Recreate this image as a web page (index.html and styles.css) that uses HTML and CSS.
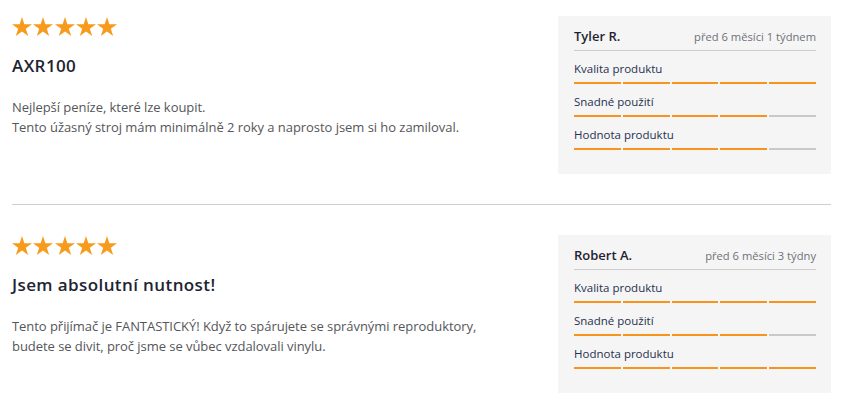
FILE: index.html
```html
<!DOCTYPE html>
<html lang="cs">
<head>
<meta charset="utf-8">
<title>Recenze</title>
<link rel="stylesheet" href="styles.css">
</head>
<body>
<div class="reviews">
  <div class="review">
    <div class="review-main">
      <div class="stars">
        <svg class="star" viewBox="0 0 20 19"><polygon points="10,0 12.35,7.26 20,7.26 13.82,11.74 16.18,19 10,14.51 3.82,19 6.18,11.74 0,7.26 7.65,7.26"/></svg>
        <svg class="star" viewBox="0 0 20 19"><polygon points="10,0 12.35,7.26 20,7.26 13.82,11.74 16.18,19 10,14.51 3.82,19 6.18,11.74 0,7.26 7.65,7.26"/></svg>
        <svg class="star" viewBox="0 0 20 19"><polygon points="10,0 12.35,7.26 20,7.26 13.82,11.74 16.18,19 10,14.51 3.82,19 6.18,11.74 0,7.26 7.65,7.26"/></svg>
        <svg class="star" viewBox="0 0 20 19"><polygon points="10,0 12.35,7.26 20,7.26 13.82,11.74 16.18,19 10,14.51 3.82,19 6.18,11.74 0,7.26 7.65,7.26"/></svg>
        <svg class="star" viewBox="0 0 20 19"><polygon points="10,0 12.35,7.26 20,7.26 13.82,11.74 16.18,19 10,14.51 3.82,19 6.18,11.74 0,7.26 7.65,7.26"/></svg>
      </div>
      <h3 class="review-title">AXR100</h3>
      <p class="review-text">Nejlepší peníze, které lze koupit.<br>Tento úžasný stroj mám minimálně 2 roky a naprosto jsem si ho zamiloval.</p>
    </div>
    <div class="card">
      <div class="card-head">
        <span class="author">Tyler R.</span>
        <span class="date">před 6 měsíci 1 týdnem</span>
      </div>
      <div class="rating">
        <div class="rating-label">Kvalita produktu</div>
        <div class="bars"><span class="bar on"></span><span class="bar on"></span><span class="bar on"></span><span class="bar on"></span><span class="bar on"></span></div>
      </div>
      <div class="rating">
        <div class="rating-label">Snadné použití</div>
        <div class="bars"><span class="bar on"></span><span class="bar on"></span><span class="bar on"></span><span class="bar on"></span><span class="bar"></span></div>
      </div>
      <div class="rating">
        <div class="rating-label">Hodnota produktu</div>
        <div class="bars"><span class="bar on"></span><span class="bar on"></span><span class="bar on"></span><span class="bar on"></span><span class="bar"></span></div>
      </div>
    </div>
  </div>

  <div class="review">
    <div class="review-main">
      <div class="stars">
        <svg class="star" viewBox="0 0 20 19"><polygon points="10,0 12.35,7.26 20,7.26 13.82,11.74 16.18,19 10,14.51 3.82,19 6.18,11.74 0,7.26 7.65,7.26"/></svg>
        <svg class="star" viewBox="0 0 20 19"><polygon points="10,0 12.35,7.26 20,7.26 13.82,11.74 16.18,19 10,14.51 3.82,19 6.18,11.74 0,7.26 7.65,7.26"/></svg>
        <svg class="star" viewBox="0 0 20 19"><polygon points="10,0 12.35,7.26 20,7.26 13.82,11.74 16.18,19 10,14.51 3.82,19 6.18,11.74 0,7.26 7.65,7.26"/></svg>
        <svg class="star" viewBox="0 0 20 19"><polygon points="10,0 12.35,7.26 20,7.26 13.82,11.74 16.18,19 10,14.51 3.82,19 6.18,11.74 0,7.26 7.65,7.26"/></svg>
        <svg class="star" viewBox="0 0 20 19"><polygon points="10,0 12.35,7.26 20,7.26 13.82,11.74 16.18,19 10,14.51 3.82,19 6.18,11.74 0,7.26 7.65,7.26"/></svg>
      </div>
      <h3 class="review-title">Jsem absolutní nutnost!</h3>
      <p class="review-text">Tento přijímač je FANTASTICKÝ! Když to spárujete se správnými reproduktory, budete se divit, proč jsme se vůbec vzdalovali vinylu.</p>
    </div>
    <div class="card">
      <div class="card-head">
        <span class="author">Robert A.</span>
        <span class="date">před 6 měsíci 3 týdny</span>
      </div>
      <div class="rating">
        <div class="rating-label">Kvalita produktu</div>
        <div class="bars"><span class="bar on"></span><span class="bar on"></span><span class="bar on"></span><span class="bar on"></span><span class="bar on"></span></div>
      </div>
      <div class="rating">
        <div class="rating-label">Snadné použití</div>
        <div class="bars"><span class="bar on"></span><span class="bar on"></span><span class="bar on"></span><span class="bar on"></span><span class="bar"></span></div>
      </div>
      <div class="rating">
        <div class="rating-label">Hodnota produktu</div>
        <div class="bars"><span class="bar on"></span><span class="bar on"></span><span class="bar on"></span><span class="bar on"></span><span class="bar on"></span></div>
      </div>
    </div>
  </div>
</div>
</body>
</html>
```

FILE: styles.css
```css
* { box-sizing: border-box; }
html, body { margin: 0; padding: 0; background: #fff; }
body {
  font-family: "Open Sans", "Liberation Sans", sans-serif;
  color: #333;
}
.reviews {
  padding: 16px 18px 0 12px;
}
.review {
  display: flex;
  align-items: flex-start;
  padding-bottom: 30px;
  border-bottom: 1px solid #cfcfcf;
}
.review + .review {
  padding-top: 30px;
  border-bottom: none;
}
.review-main {
  width: 500px;
  padding-top: 1px;
}
.stars {
  display: flex;
  gap: 1.25px;
}
.star {
  width: 20px;
  height: 19px;
  fill: #f79b1c;
}
.review-title {
  margin: 18px 0 0;
  font-size: 17px;
  line-height: 24px;
  font-weight: 600;
  letter-spacing: 0.4px;
  color: #1d2433;
}
.review-text {
  margin: 19px 0 0;
  font-size: 13px;
  line-height: 20px;
  letter-spacing: -0.05px;
  color: #55565a;
}
.card {
  margin-left: auto;
  width: 273px;
  background: #f5f5f5;
  padding: 10px 15px 24px 16px;
}
.card-head {
  display: flex;
  justify-content: space-between;
  align-items: baseline;
  line-height: 20px;
  padding-bottom: 3px;
  border-bottom: 1px solid #cccccc;
}
.author {
  font-size: 13px;
  font-weight: 600;
  color: #1f2430;
}
.date {
  font-size: 11.2px;
  color: #6f7178;
}
.rating {
  margin-top: 10px;
}
.rating-label {
  font-size: 11.5px;
  line-height: 16px;
  color: #27314f;
}
.bars {
  display: flex;
  gap: 2px;
  margin-top: 5px;
}
.bar {
  flex: 1;
  height: 2px;
  background: #c9c9c9;
}
.bar.on {
  background: #f7941d;
}
```
